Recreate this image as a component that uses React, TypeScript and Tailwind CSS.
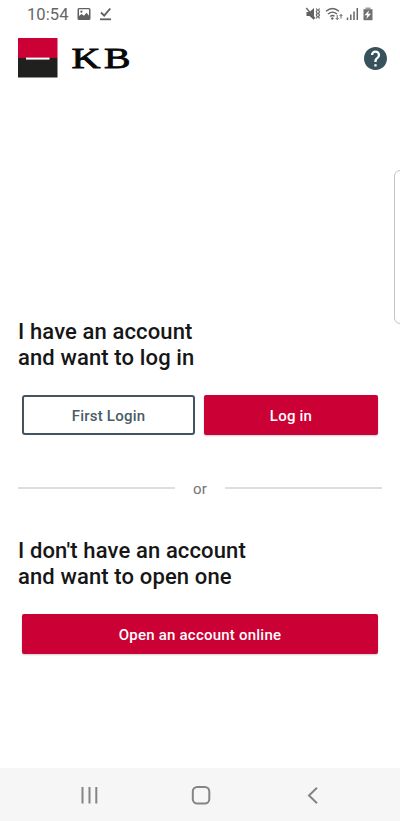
import type { ReactNode } from 'react';

function StatusBar() {
  return (
    <div className="flex h-7 items-center justify-between pl-[27px] pr-[26px] text-[#666]">
      <div className="flex items-center">
        <span className="w-[50px] whitespace-nowrap pt-px text-[16.5px] leading-7 tracking-[0.1px]">10:54</span>
        <svg className="mb-px" width="14" height="14" viewBox="0 0 14 14">
          <path fillRule="evenodd" fill="#606060" d="M2 1h10a1.500 1.500 0 0 1 1.500 1.500v9A1.500 1.500 0 0 1 12 13H2A1.500 1.500 0 0 1 .5 11.500v-9A1.500 1.500 0 0 1 2 1Zm0 1.300v9.400h10V2.300Z" />
          <circle cx="4.400" cy="4.700" r="1.100" fill="#606060" />
          <path d="M2 9l2.500-2L7 8.800l2.500-3L12.300 9v3H2Z" fill="#606060" />
        </svg>
        <svg className="mb-px ml-2" width="13" height="14" viewBox="0 0 13 14" fill="none" stroke="#606060">
          <path d="M2 5.500l3.200 3.200L11.300 1.500" strokeWidth="1.900" />
          <path d="M1 12.300h11" strokeWidth="1.800" />
        </svg>
      </div>
      <svg width="70" height="16" viewBox="0 0 70 16" fill="none" stroke="#666">
        <path d="M2.500 6h3l4.500-4v12l-4.500-4h-3Z" fill="#606060" stroke="none" />
        <path d="M2.300 2l8.700 10.500" strokeWidth="1.400" />
        <path d="M12.300 2.500l1 1.500-1 1.700 1 1.700-1 1.700 1 1.700-1 1.700M15.500 2.500l-1 1.500 1 1.700-1 1.700 1 1.700-1 1.700 1 1.700" strokeWidth="1.200" />
        <path d="M22 5.300q6.500-5.500 13 0M24 8q4.500-3.700 9 0M26.200 10.500q2.300-2 4.300-.3" strokeWidth="1.400" />
        <circle cx="28.300" cy="12.500" r="1.200" fill="#666" stroke="none" />
        <path d="M33.200 9v4.500m-1.500-1.500l1.500 1.500 1.500-1.500M37 12.500V8.500m-1.400 1.500l1.400-1.500 1.400 1.500" strokeWidth="1" />
        <path d="M43.500 11.500v2.500M46.800 8.500v5.500M50 5.500v8.500M53.300 2v12" strokeWidth="1.500" />
        <path d="M61.500 1.500h5v1.700H61.500Z" fill="#999" stroke="none" />
        <path d="M59.500 3.200h9v11h-9Z" fill="#707070" stroke="none" />
        <path d="M65 4.300l-4.500 4.900h2.700l-.9 3.800 4.700-5.300h-2.800Z" fill="#fff" stroke="none" />
      </svg>
    </div>
  );
}

function Header() {
  return (
    <header className="flex h-[60px] items-center justify-between pl-[18px] pr-[13px]">
      <div className="flex items-center gap-[13px]">
        <svg width="40" height="40" viewBox="0 0 40 40">
          <path fill="#cb0034" d="M0 0h39.500v20H0Z" />
          <path fill="#20211e" d="M0 20h39.500v19.500H0Z" />
          <path fill="#fff" d="M8 19.600h23.500v2H8Z" />
        </svg>
        <svg className="overflow-visible" width="64" height="40" viewBox="0 0 64 40" aria-label="KB" fill="#080808" stroke="#080808" strokeWidth=".8">
          <text x="0.500" y="29.500" textLength="29" lengthAdjust="spacingAndGlyphs" className="font-['Liberation_Serif',serif] text-[29px]">K</text>
          <text x="33" y="29.500" textLength="26.500" lengthAdjust="spacingAndGlyphs" className="font-['Liberation_Serif',serif] text-[29px]">B</text>
        </svg>
      </div>
      <svg width="23" height="23" viewBox="0 0 24 24" fill="#38525d">
        <path d="M12 0C5.380 0 0 5.380 0 12s5.380 12 12 12 12-5.380 12-12S18.620 0 12 0Zm1.200 20.400h-2.400V18h2.400v2.400Zm2.480-9.300-1.080 1.100c-.86.880-1.400 1.600-1.400 3.400h-2.400V15c0-1.320.540-2.520 1.400-3.400l1.490-1.510c.44-.430.710-1.030.710-1.690a2.400 2.400 0 0 0-4.800 0H7.200a4.800 4.800 0 0 1 9.600 0c0 1.060-.43 2.010-1.120 2.700Z" />
      </svg>
    </header>
  );
}

function Heading({ children }: { children: ReactNode }) {
  return <h2 className="ml-[18px] h-[52px] whitespace-nowrap text-[22px] font-medium leading-[26px] tracking-[0.13px] text-[#161616]">{children}</h2>;
}

function NavBar() {
  return (
    <nav className="flex h-[53px] items-center bg-[#f6f6f6] pl-[80px] text-[#848484]">
      <svg className="shrink-0" width="242" height="20" viewBox="0 0 242 20" fill="none" stroke="currentColor" strokeWidth="2">
        <path d="M2.500 2v16.500M9.500 2v16.500M16.300 2v16.500" />
        <rect x="112.800" y="2" width="16.500" height="16.500" rx="4.500" />
        <path d="M237 2.700l-8 7.800 8 7.800" />
      </svg>
    </nav>
  );
}

export default function App() {
  return (
    <div className="relative flex h-[821px] w-[400px] flex-col overflow-hidden bg-white font-['Roboto',sans-serif]">
      <StatusBar />
      <Header />
      <main className="flex flex-1 flex-col pt-[231px]">
        <Heading>I have an account<br />and want to log in</Heading>
        <div className="mx-[22px] mt-[24px] flex h-10 gap-[9px] text-[15px] font-medium tracking-[0.22px]">
          <button className="w-[173px] rounded-[3px] border-2 border-[#41545f] pt-0.5 text-[#4a5c67]">First Login</button>
          <button className="w-[174px] rounded-[2px] bg-[#cb0034] pt-0.5 text-white shadow-[0_1px_2px_#0003]">Log in</button>
        </div>
        <div className="mx-[18px] mt-[43px] flex h-5 items-center text-[15px] tracking-[0.2px] text-[#737373]">
          <span className="h-[2px] w-[157px] bg-[#dedede]" />
          <span className="flex-1 pt-0.5 text-center">or</span>
          <span className="h-[2px] w-[157px] bg-[#dedede]" />
        </div>
        <div className="mt-[40px]">
          <Heading>I don't have an account<br />and want to open one</Heading>
        </div>
        <button className="mx-[22px] mt-[24px] h-10 rounded-[2px] bg-[#cb0034] pt-0.5 text-[15px] font-medium tracking-[0.22px] text-white shadow-[0_1px_2px_#0003]">Open an account online</button>
      </main>
      <NavBar />
      <div className="absolute left-[394px] top-[170px] h-[154px] w-4 rounded-[6px] border border-[#c4c4c4]" />
    </div>
  );
}
